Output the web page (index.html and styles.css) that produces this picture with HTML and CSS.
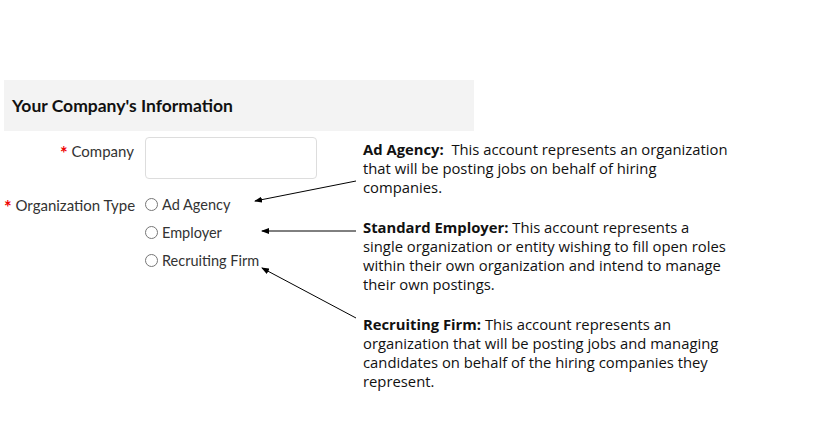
FILE: index.html
```html
<!DOCTYPE html>
<html lang="en">
<head>
  <meta charset="UTF-8">
  <meta name="viewport" content="width=device-width, initial-scale=1.0">
  <title>Your Company's Information</title>
  <link rel="stylesheet" href="styles.css">
</head>
<body>
  <div class="page">
    <!-- Cabeçalho da seção -->
    <div class="section-header">
      <h2>Your Company's Information</h2>
    </div>

    <div class="content">
      <!-- Formulário -->
      <form class="company-form">
        <div class="row">
          <label class="label" for="company"><span class="req">*</span> Company</label>
          <input type="text" id="company" class="text-input">
        </div>
        <div class="row row-radios">
          <span class="label"><span class="req">*</span> Organization Type</span>
          <div class="radios">
            <label class="radio"><input type="radio" name="orgType"> Ad Agency</label>
            <label class="radio"><input type="radio" name="orgType"> Employer</label>
            <label class="radio"><input type="radio" name="orgType"> Recruiting Firm</label>
          </div>
        </div>
      </form>

      <!-- Notas explicativas -->
      <div class="notes">
        <p><b>Ad Agency:</b>&nbsp; This account represents an organization that will be posting jobs on behalf of hiring companies.</p>
        <p><b>Standard Employer:</b> This account represents a single organization or entity wishing to fill open roles within their own organization and intend to manage their own postings.</p>
        <p><b>Recruiting Firm:</b> This account represents an organization that will be posting jobs and managing candidates on behalf of the hiring companies they represent.</p>
      </div>
    </div>

    <!-- Setas ligando notas às opções -->
    <svg class="arrows" width="838" height="445" viewBox="0 0 838 445">
      <defs>
        <marker id="head" markerWidth="8" markerHeight="6" refX="7" refY="3" orient="auto" markerUnits="userSpaceOnUse">
          <path d="M0,0 L8,3 L0,6 z" fill="#000"/>
        </marker>
      </defs>
      <line x1="356" y1="181" x2="255" y2="201" stroke="#000" stroke-width="1" marker-end="url(#head)"/>
      <line x1="356" y1="231" x2="262" y2="231" stroke="#000" stroke-width="1" marker-end="url(#head)"/>
      <line x1="356" y1="318" x2="262" y2="268" stroke="#000" stroke-width="1" marker-end="url(#head)"/>
    </svg>
  </div>
</body>
</html>
```

FILE: styles.css
```css
body {
  margin: 0;
  background: #fff;
  font-family: Lato, sans-serif;
  color: #222;
}
.page {
  position: relative;
  width: 838px;
  height: 445px;
  padding: 80px 0 0 4px;
  box-sizing: border-box;
}
.section-header {
  width: 470px;
  height: 51px;
  background: #f3f3f3;
  display: flex;
  align-items: center;
  padding-left: 8px;
  box-sizing: border-box;
}
.section-header h2 {
  margin: 0;
  font-size: 17.5px;
  font-weight: 700;
  color: #111;
}
.content {
  display: flex;
}
.company-form {
  width: 359px;
  padding-top: 6px;
}
.row {
  display: flex;
  align-items: flex-start;
  gap: 11px;
}
.label {
  width: 130px;
  text-align: right;
  font-size: 15px;
  line-height: 20px;
  color: #333;
  padding-top: 4px;
  white-space: nowrap;
}
.req {
  color: #e00;
  font-size: 18px;
  font-weight: 700;
  vertical-align: -3px;
}
.text-input {
  width: 172px;
  height: 42px;
  margin: 0;
  border: 1px solid #ddd;
  border-radius: 4px;
  box-sizing: border-box;
}
.row-radios {
  margin-top: 15px;
}
.row-radios .label {
  padding-top: 1px;
}
.radios {
  display: flex;
  flex-direction: column;
  gap: 7px;
}
.radio {
  display: flex;
  align-items: center;
  gap: 4px;
  font-size: 14.5px;
  color: #333;
  height: 21px;
}
.radio input {
  margin: 0;
  width: 13px;
  height: 13px;
}
.notes {
  padding-top: 9px;
  width: 367px;
  font-family: "Open Sans", sans-serif;
  font-size: 14.8px;
  line-height: 19px;
  color: #111;
}
.notes p {
  margin: 0 0 21px;
}
.arrows {
  position: absolute;
  left: 0;
  top: 0;
  pointer-events: none;
}
```
